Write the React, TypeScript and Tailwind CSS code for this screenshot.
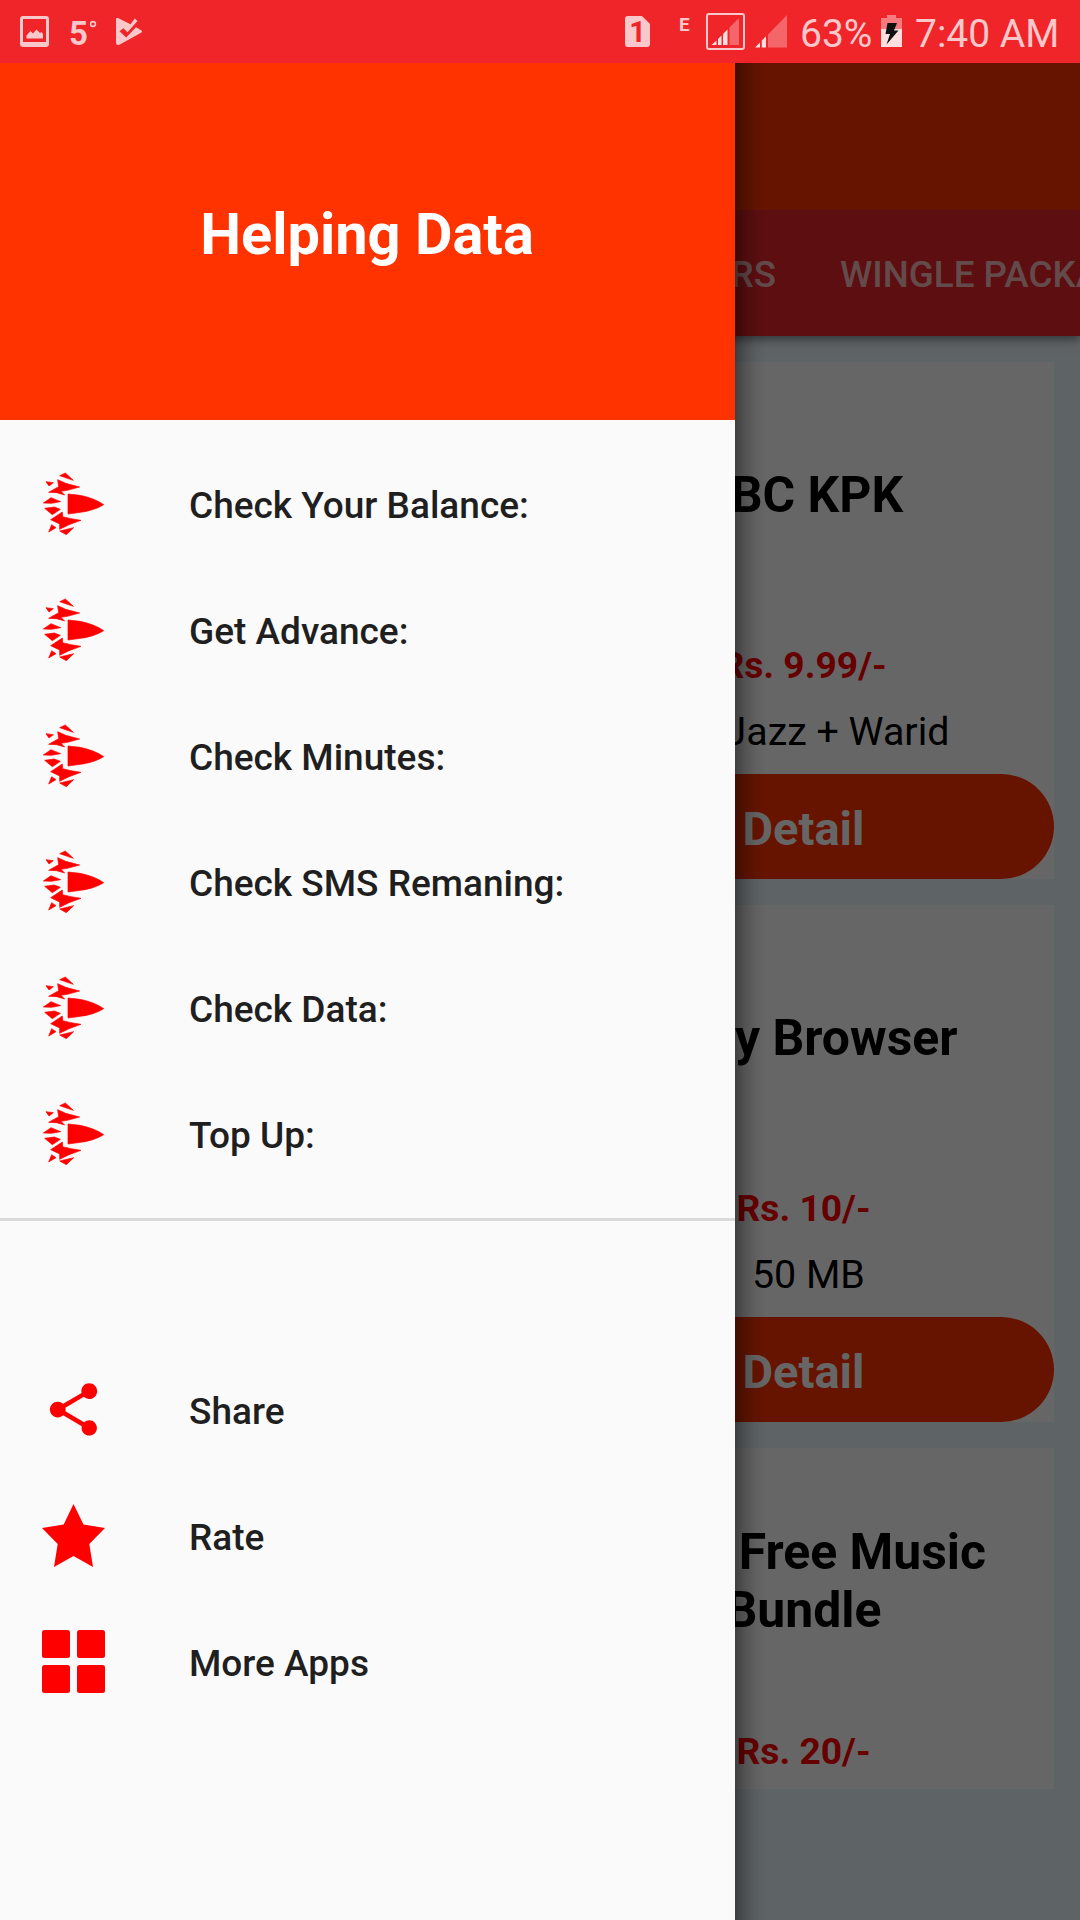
import React from "react";

const MENU = [
  "Check Your Balance:",
  "Get Advance:",
  "Check Minutes:",
  "Check SMS Remaning:",
  "Check Data:",
  "Top Up:",
];

function BulletIcon() {
  return (
    <svg className="-mt-px h-[63px] w-[63px]" viewBox="36 36 189 189" fill="#ff0000" stroke="#ff0000" strokeWidth="2">
      <path d="M114 102 L150 106 Q194 115 221 134 Q194 151 152 157 L114 162Z" />
      <path d="M89 47 L106 39 L130 61Z" />
      <path d="M48 65 L70 68 L57 78Z" />
      <path d="M83 59 L107 70 L149 81 L112 91 L93 94 L104 105 L80 98 L56 97 L86 80Z" />
      <path d="M40 129 L63 113 L92 125 L64 130Z" />
      <path d="M44 145 L73 141 L91 148 L67 164Z" />
      <path d="M97 156 L98 170 L123 176 L153 181 L117 194 L89 208 L89 192 L62 179Z" />
      <path d="M65 194 L78 203 L56 216Z" />
      <path d="M89 213 L131 203 L109 224Z" />
    </svg>
  );
}

function ShareIcon() {
  return (
    <svg className="-mt-px h-[63px] w-[63px]" viewBox="0 0 24 24" fill="#ff0000">
      <path d="M18 16.08c-.76 0-1.44.3-1.96.77L8.91 12.7c.05-.23.09-.46.09-.7s-.04-.47-.09-.7l7.05-4.11c.54.5 1.25.81 2.04.81 1.66 0 3-1.34 3-3s-1.34-3-3-3-3 1.34-3 3c0 .24.04.47.09.7L8.04 9.81C7.5 9.31 6.79 9 6 9c-1.66 0-3 1.34-3 3s1.34 3 3 3c.79 0 1.5-.31 2.04-.81l7.12 4.16c-.05.21-.08.43-.08.65 0 1.61 1.31 2.92 2.92 2.92s2.92-1.31 2.92-2.92-1.31-2.92-2.92-2.92z" />
    </svg>
  );
}

function StarIcon() {
  return (
    <svg className="-mt-px h-[63px] w-[63px]" viewBox="0 0 63 63" fill="#ff0000">
      <path d="M31.5 0 L41.5 20.5 L63 24 L47.3 40 L51 63 L31.5 52 L12 63 L15.7 40 L0 24 L21.7 20.5Z" />
    </svg>
  );
}

function GridIcon() {
  return (
    <svg className="-mt-px h-[63px] w-[63px]" viewBox="0 0 63 63" fill="#ff0000">
      <rect x="0" y="0" width="28" height="28" rx="2.5" />
      <rect x="35" y="0" width="28" height="28" rx="2.5" />
      <rect x="0" y="35" width="28" height="28" rx="2.5" />
      <rect x="35" y="35" width="28" height="28" rx="2.5" />
    </svg>
  );
}

function Row({ icon, label }: { icon: React.ReactNode; label: string }) {
  return (
    <li className="flex h-[126px] items-center gap-[84px] pl-[42px]">
      {icon}
      <span className="pt-[3px] text-[37px] leading-none font-medium whitespace-nowrap text-[#1f1f1f]">
        {label}
      </span>
    </li>
  );
}

function StatusBar() {
  return (
    <header className="flex h-[63px] items-start bg-[#f0252a] text-[#fac8ca]">
      <svg className="mt-4 ml-5 h-[31px] w-[29px]" viewBox="0 0 29 31" fill="currentColor">
        <path fillRule="evenodd" d="M3 0H26Q29 0 29 3V28Q29 31 26 31H3Q0 31 0 28V3Q0 0 3 0ZM3 3V26H26V3Z" />
        <path d="M6.500 22.500V19.500L10.500 15L13 17.500L16.500 13.500L20 17L21.500 16L23 18V22.500Z" />
      </svg>
      <span className="mt-[15px] ml-[20px] w-[20px] text-[33px] leading-[38px] font-bold">5</span>
      <svg className="mt-[20px] h-[8px] w-[8px]" viewBox="0 0 8 8" fill="none" stroke="currentColor" strokeWidth="1.6">
        <circle cx="4" cy="4" r="2.400" />
      </svg>
      <svg className="mt-[17px] ml-[18px] h-[30px] w-[28px]" viewBox="0 0 28 30" fill="currentColor">
        <path d="M1 2Q1.200 .500 3 1L15.500 7.300L19.800 1.500L22.500 4L12.500 15.200L8.300 11.200L4.500 14.200L11.200 20.500L21 10.300L26.500 13.500Q27.700 14.500 26.500 15.500L4 28Q1 28.500 1 26Z" />
      </svg>

      <div className="relative mt-[16px] ml-[482px] h-[31px] w-[25px]">
        <svg className="h-[31px] w-[25px]" viewBox="0 0 25 31" fill="currentColor">
          <path d="M3 0H17L25 8V28Q25 31 22 31H3Q0 31 0 28V3Q0 0 3 0Z" />
        </svg>
        <span className="absolute inset-0 text-center text-[29px] leading-[32px] font-bold text-[#f0252a]">1</span>
      </div>
      <span className="mt-[14px] ml-[29px] w-[27px] text-[19px] leading-[22px] font-bold">E</span>
      <svg className="mt-[13px] h-[37px] w-[39px]" viewBox="0 0 39 37">
        <rect x="1" y="1" width="37" height="35" rx="2" fill="none" stroke="currentColor" strokeWidth="2" />
        <path d="M23.500 32V14.500L33 5V32Z" fill="#f5666a" />
        <path d="M5.500 32L10.500 27.500V32ZM12 32V26L15.500 22.500V32ZM17 32V21L21.500 16.500V32Z" fill="#fddfe0" />
      </svg>
      <svg className="mt-[15px] ml-[10px] h-[33px] w-[32px]" viewBox="0 0 32 33">
        <path d="M13 32.500V19.500L32 0V32.500Z" fill="#f5666a" />
        <path d="M0 32.500L5 27.500V32.500ZM6.800 32.500V25.500L11 21.300V32.500Z" fill="#fddfe0" />
      </svg>
      <span className="mt-[11px] ml-[13px] w-[80px] text-[39px] leading-[46px] whitespace-nowrap">63%</span>
      <svg className="mt-[15px] ml-[1px] h-[32px] w-[21px]" viewBox="0 0 21 32">
        <path d="M6 0H15V3H21V14H0V3H6Z" fill="#f57b7e" />
        <path d="M0 14H21V32H0Z" fill="#fddfe0" />
        <path d="M6.500 8H16L13 15.500H17.500L5.500 29.500L9 19H4.500Z" fill="#111111" />
      </svg>
      <span className="mt-[11px] ml-[13px] text-[39px] leading-[46px] whitespace-nowrap">7:40 AM</span>
    </header>
  );
}

function Card({ title, price, note, last = false }: { title: string; price: string; note?: string; last?: boolean }) {
  return (
    <article
      className={
        "flex w-[501px] shrink-0 flex-col items-center overflow-hidden bg-white text-center " +
        (last ? "h-[341px]" : "h-[517px]")
      }
    >
      <div className="flex h-[266px] w-full shrink-0 items-center justify-center">
        <h2 className="w-[440px] text-[49.9px] leading-[58px] font-bold text-black">{title}</h2>
      </div>
      <p className="mt-[16px] h-[43px] shrink-0 text-[37.2px] leading-[43px] font-bold text-[#ff0000]">{price}</p>
      {note && (
        <p className="mt-[22px] h-[46px] shrink-0 text-[39.4px] leading-[46px] whitespace-pre text-black">{note}</p>
      )}
      {!last && (
        <button className="mt-auto h-[105px] w-full shrink-0 rounded-full bg-[#ff3300] pt-[5px] text-[47px] font-bold text-white">
          Detail
        </button>
      )}
    </article>
  );
}

export default function App() {
  return (
    <div className="flex h-[1920px] w-[1080px] flex-col overflow-hidden font-['Roboto',sans-serif]">
      <StatusBar />
      <div className="relative h-[1857px] overflow-hidden bg-[#ebf7ff]">
        <main className="flex h-full flex-col">
          <div className="relative shadow-[0_3px_10px_rgba(0,0,0,0.5)]">
            <div className="h-[147px] bg-[#ff3300]" />
            <nav className="flex h-[126px] items-center justify-end overflow-hidden bg-[#e82328] pt-[3px] text-[36.75px] font-medium whitespace-nowrap text-white/70">
              <span className="pr-[64px]">OFFERS</span>
              <span className="w-[240px]">WINGLE PACKAGES</span>
            </nav>
          </div>
          <section className="flex flex-col items-end gap-[26px] pt-[26px] pr-[26px]">
            <Card title={"BBC KPK\u200a"} price="Rs. 9.99/-" note="For Jazz + Warid" />
            <Card title="Daily Browser" price="Rs. 10/-" note=" 50 MB" />
            <Card title="Jazz Free Music Bundle" price="Rs. 20/-" last />
          </section>
        </main>
        <div className="absolute inset-0 bg-black/60" />
        <aside className="absolute inset-y-0 left-0 w-[735px] bg-[#fafafa]">
          <div className="absolute inset-y-0 left-full w-[32px] bg-[linear-gradient(to_right,rgba(0,0,0,0.38),rgba(0,0,0,0.2)_30%,rgba(0,0,0,0.06)_65%,transparent)]" />
          <div className="flex h-[357px] items-center justify-center bg-[#ff3300] pr-px pb-[13px]">
            <h1 className="text-[57.75px] leading-none font-bold text-white">Helping Data</h1>
          </div>
          <ul className="pt-[21px]">
            {MENU.map((m) => (
              <Row key={m} icon={<BulletIcon />} label={m} />
            ))}
          </ul>
          <hr className="mt-[21px] h-[3px] border-0 bg-[#dbdbdb]" />
          <ul className="pt-[126px]">
            <Row icon={<ShareIcon />} label="Share" />
            <Row icon={<StarIcon />} label="Rate" />
            <Row icon={<GridIcon />} label="More Apps" />
          </ul>
        </aside>
      </div>
    </div>
  );
}
